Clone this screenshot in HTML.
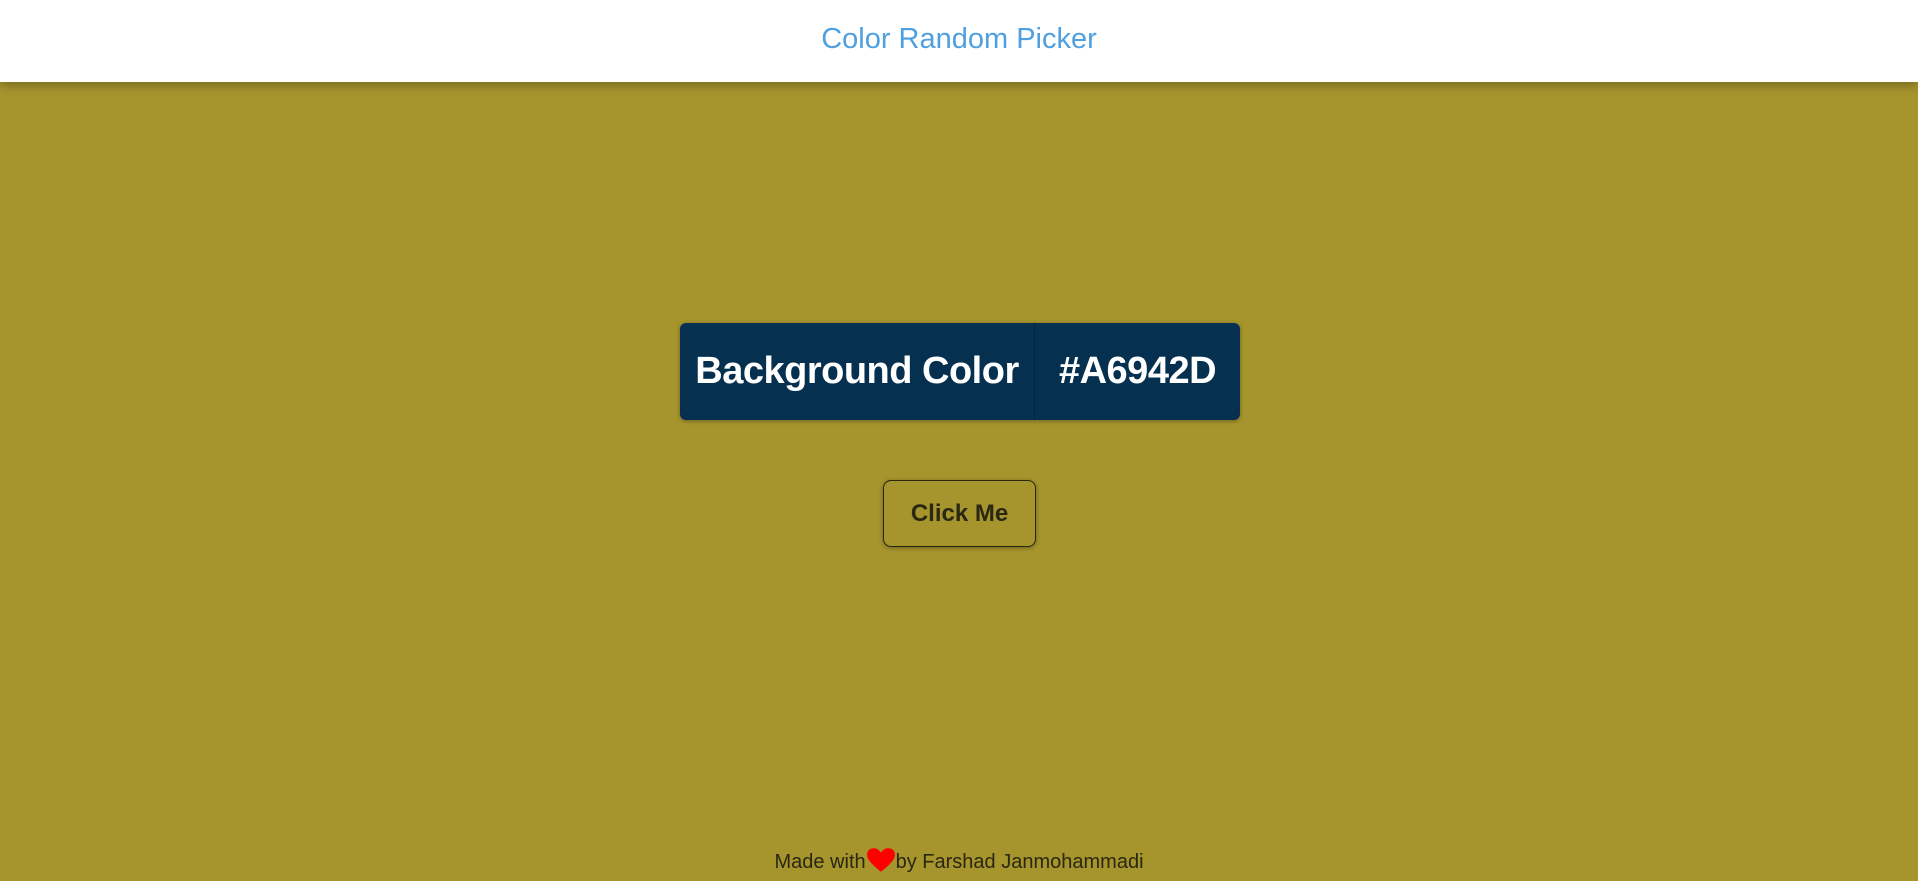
<!DOCTYPE html>
<html><head><meta charset="utf-8"><style>
*{margin:0;padding:0;box-sizing:border-box}
html,body{width:1918px;height:881px;overflow:hidden}
body{background:#A6942D;font-family:"Liberation Sans",sans-serif;position:relative}
.hdr{position:absolute;left:0;top:0;width:1918px;height:82px;background:#fff;box-shadow:0 3px 10px rgba(0,0,0,.3);text-align:center;line-height:78px;color:#4fa0e0;font-size:29px}
.box{position:absolute;left:680px;top:323px;width:560px;height:97px;background:#06304F;border-radius:6px;box-shadow:0 1px 4px rgba(0,0,0,.35);color:#fff;font-size:38px;font-weight:bold;line-height:97px}
.a{position:absolute;left:0;width:354px;text-align:center;letter-spacing:-0.5px}
.b{position:absolute;left:354px;width:206px;text-align:center;border-left:1px solid #03243d;height:97px;letter-spacing:-0.5px}
.btn{position:absolute;left:883px;top:480px;width:153px;height:67px;border:1px solid #2a2610;border-radius:8px;box-shadow:0 1px 4px rgba(0,0,0,.35);text-align:center;line-height:65px;font-weight:bold;font-size:24px;color:#2a2712}
.ft{position:absolute;left:0;width:1918px;top:847px;text-align:center;font-size:20px;color:#2a2712;line-height:26px}
.ft svg{vertical-align:-5px}
</style></head><body>
<div class="hdr">Color Random Picker</div>
<div class="box"><span class="a">Background Color</span><span class="b">#A6942D</span></div>
<div class="btn">Click Me</div>
<div class="ft">Made with<svg width="30" height="26" viewBox="0 0 28 24"><path d="M14 23 C4 15 1 11 1 7 C1 3 4 1 7.5 1 C10.5 1 12.5 3 14 5 C15.5 3 17.5 1 20.5 1 C24 1 27 3 27 7 C27 11 24 15 14 23Z" fill="#f00"/></svg>by Farshad Janmohammadi</div>
</body></html>
